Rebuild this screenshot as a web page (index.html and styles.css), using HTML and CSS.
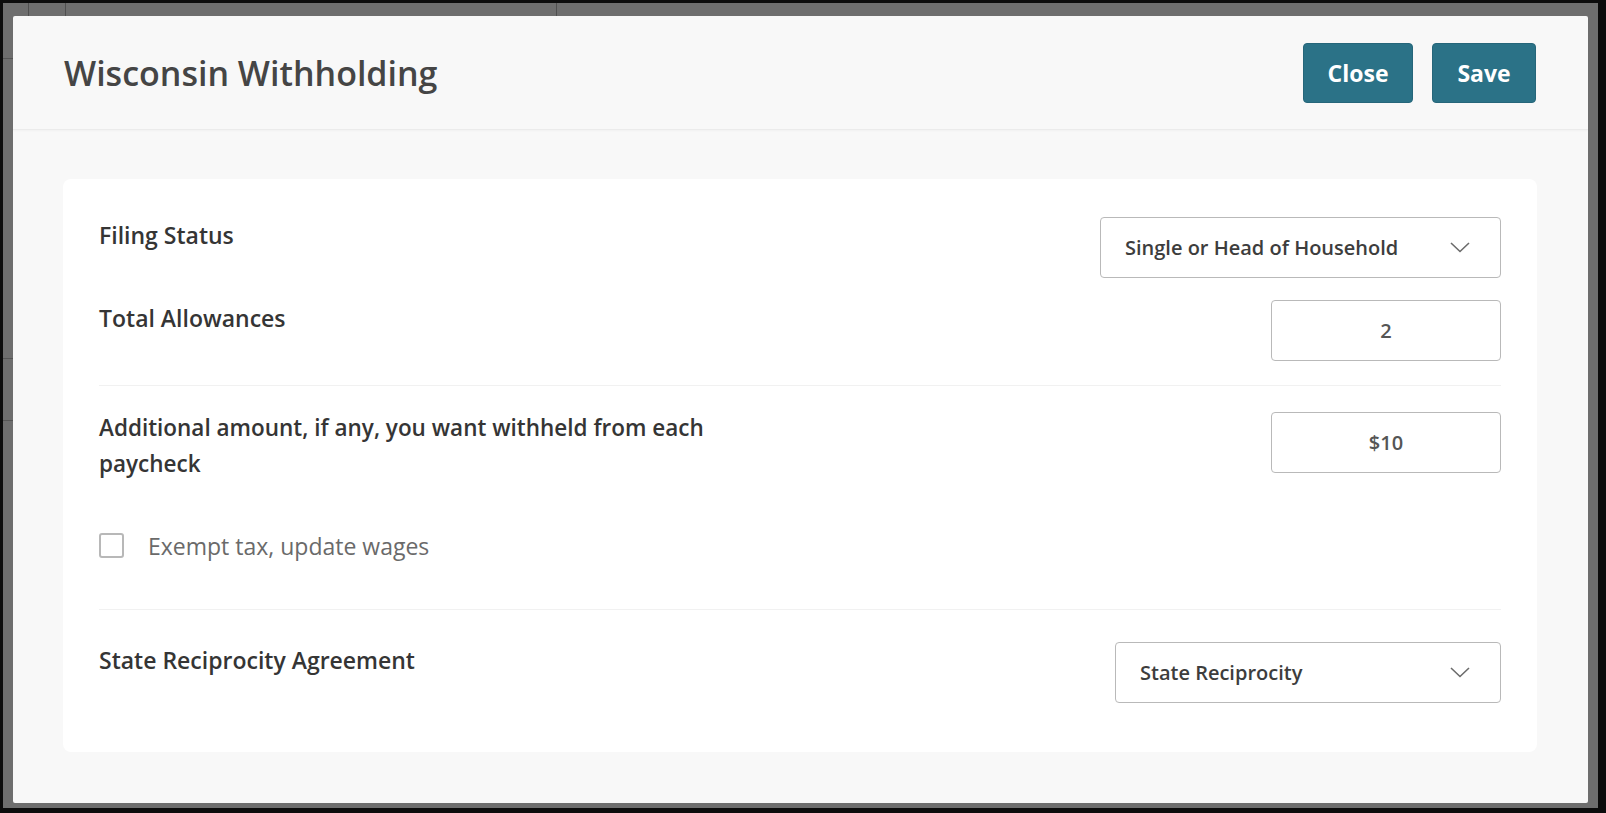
FILE: index.html
```html
<!DOCTYPE html>
<html lang="en">
<head>
  <meta charset="UTF-8" />
  <meta name="viewport" content="width=device-width, initial-scale=1.0" />
  <title>Wisconsin Withholding</title>
  <link rel="stylesheet" href="styles.css">
</head>
<body>
  <div class="backdrop">
    <div class="modal">
      <header class="modal-header">
        <h1>Wisconsin Withholding</h1>
        <div class="actions">
          <button type="button" class="btn btn-close">Close</button>
          <button type="button" class="btn btn-save">Save</button>
        </div>
      </header>

      <div class="modal-body">
        <form class="card">
          <div class="row">
            <label class="field-label">Filing Status</label>
            <div class="select select-status">
              <span>Single or Head of Household</span>
              <svg class="chevron" width="20" height="11" viewBox="0 0 20 11"><path d="M1 1 L10 9.5 L19 1" fill="none" stroke="#6b6b6b" stroke-width="1.6"/></svg>
            </div>
          </div>

          <div class="row row-gap">
            <label class="field-label">Total Allowances</label>
            <div class="input-box">2</div>
          </div>

          <div class="sep"></div>

          <div class="row">
            <label class="field-label long">Additional amount, if any, you want withheld from each paycheck</label>
            <div class="input-box">$10</div>
          </div>

          <label class="check-row">
            <span class="checkbox"></span>
            <span class="check-text">Exempt tax, update wages</span>
          </label>

          <div class="sep sep-low"></div>

          <div class="row">
            <label class="field-label">State Reciprocity Agreement</label>
            <div class="select select-state">
              <span>State Reciprocity</span>
              <svg class="chevron" width="20" height="11" viewBox="0 0 20 11"><path d="M1 1 L10 9.5 L19 1" fill="none" stroke="#6b6b6b" stroke-width="1.6"/></svg>
            </div>
          </div>
        </form>
      </div>
    </div>
  </div>
</body>
</html>
```

FILE: styles.css
```css
html, body {
  margin: 0;
  height: 813px;
  background: #0c0c0c;
  overflow: hidden;
}
body {
  font-family: "Open Sans", Arial, sans-serif;
  color: #333;
}
/* dimmed page behind the dialog, with a few of its lines showing */
.backdrop {
  margin: 3px 8px 5px 3px;
  height: 805px;
  box-sizing: border-box;
  padding: 13px 10px 5px 10px;
  background:
    linear-gradient(#4f4f4f, #4f4f4f) 25px 0 / 1px 13px no-repeat,
    linear-gradient(#4f4f4f, #4f4f4f) 62px 0 / 1px 13px no-repeat,
    linear-gradient(#4f4f4f, #4f4f4f) 553px 0 / 1px 13px no-repeat,
    linear-gradient(#555, #555) 0 55px / 10px 1px no-repeat,
    linear-gradient(#555, #555) 0 355px / 10px 1px no-repeat,
    linear-gradient(#555, #555) 0 417px / 10px 1px no-repeat,
    #6e6e6e;
}
.modal {
  height: 787px;
  background: #f8f8f8;
  border-radius: 2px;
  display: flex;
  flex-direction: column;
}

/* header */
.modal-header {
  height: 113px;
  flex-shrink: 0;
  display: flex;
  align-items: center;
  justify-content: space-between;
  padding: 0 52px 0 51px;
  border-bottom: 1px solid #ebebeb;
  box-shadow: 0 1px 2px rgba(0, 0, 0, 0.03);
}
.modal-header h1 {
  margin: 0;
  font-size: 34px;
  font-weight: 600;
  color: #454545;
}
.actions {
  display: flex;
  gap: 19px;
}
.btn {
  height: 60px;
  border: 1px solid #26667a;
  border-radius: 4px;
  background-color: #2b7287;
  color: #fff;
  font-family: "Open Sans", Arial, sans-serif;
  font-size: 23px;
  font-weight: 700;
  cursor: pointer;
}
.btn-close {
  width: 110px;
}
.btn-save {
  width: 104px;
}

/* body */
.modal-body {
  padding: 49px 51px 50px 50px;
}
.card {
  background: #fff;
  border-radius: 8px;
  padding: 38px 36px 49px 36px;
}
.row {
  display: flex;
  justify-content: space-between;
  align-items: flex-start;
}
.row-gap {
  margin-top: 22px;
}
.field-label {
  font-size: 23px;
  font-weight: 600;
  line-height: 36px;
  color: #353535;
}
.field-label.long {
  width: 660px;
  margin-top: -2px;
  font-size: 22.5px;
}
.select, .input-box {
  box-sizing: border-box;
  height: 61px;
  border: 1.5px solid #b9b9b9;
  border-radius: 4px;
  background: #fff;
  font-size: 20px;
  font-weight: 600;
  color: #3d3d3d;
}
.select {
  display: flex;
  align-items: center;
  justify-content: space-between;
  padding: 0 30px 0 24px;
}
.select-status {
  width: 401px;
}
.select-state {
  width: 386px;
}
.input-box {
  width: 230px;
  display: flex;
  align-items: center;
  justify-content: center;
  color: #555;
}
.sep {
  height: 1px;
  background: #f1f1f1;
  margin: 24px 0 26px;
}
.sep-low {
  margin: 51px 0 32px;
}
.check-row {
  display: flex;
  align-items: center;
  gap: 24px;
  margin-top: 51px;
  height: 25px;
}
.checkbox {
  box-sizing: border-box;
  width: 25px;
  height: 25px;
  border: 2px solid #b8b8b8;
  border-radius: 3px;
}
.check-text {
  font-size: 23px;
  color: #6a6a6a;
}
```
